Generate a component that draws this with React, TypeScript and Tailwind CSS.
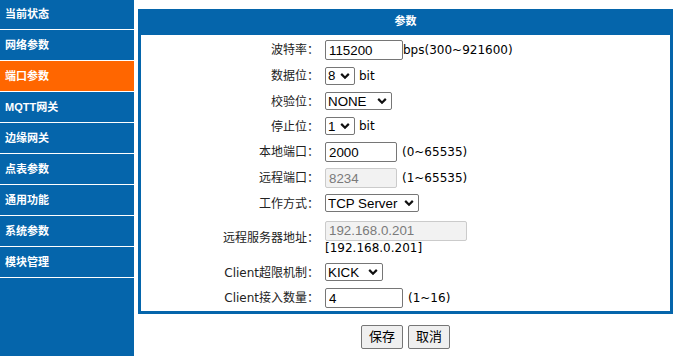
const menu = [
  '当前状态',
  '网络参数',
  '端口参数',
  'MQTT网关',
  '边缘网关',
  '点表参数',
  '通用功能',
  '系统参数',
  '模块管理',
]

const Chevron = () => (
  <svg
    className="pointer-events-none absolute right-[5px] top-1/2 -translate-y-1/2"
    width="10"
    height="7"
    viewBox="0 0 10 7"
    fill="none"
  >
    <path d="M1.2 1.4 5 5.2 8.8 1.4" stroke="#111" strokeWidth="2.2" />
  </svg>
)

const Select = ({ value, width }: { value: string; width: string }) => (
  <span className={`relative inline-block ${width}`}>
    <select
      defaultValue={value}
      className="h-[18px] w-full appearance-none rounded-[2px] border border-[#767676] bg-white pl-[2px] font-['Liberation_Sans',sans-serif] text-[13.33px] leading-none text-black"
    >
      <option>{value}</option>
    </select>
    <Chevron />
  </span>
)

const Input = ({
  value,
  width,
  disabled,
}: {
  value: string
  width: string
  disabled?: boolean
}) => (
  <input
    defaultValue={value}
    disabled={disabled}
    className={`h-[20px] ${width} rounded-[2px] border px-[3px] font-['Liberation_Sans',sans-serif] text-[13.33px] leading-none ${
      disabled
        ? 'border-[#cbcbcb] bg-[#f2f2f2] text-[#7a7a7a]'
        : 'border-[#767676] bg-white text-black'
    }`}
  />
)

const Row = ({
  label,
  height,
  children,
}: {
  label: string
  height: string
  children: React.ReactNode
}) => (
  <div className={`grid grid-cols-[178px_1fr] items-center ${height}`}>
    <div className="text-right text-[12px] text-[#222]">{label}</div>
    <div className="flex items-center pl-[6px] text-[12px] text-black">
      {children}
    </div>
  </div>
)

export default function App() {
  return (
    <div className="flex h-[356px] bg-white font-['DejaVu_Sans','Noto_Sans_CJK_SC',sans-serif]">
      <nav className="w-[134px] shrink-0 bg-[#0565ab]">
        <ul className="-mt-px font-['Liberation_Sans','Noto_Sans_CJK_SC',sans-serif]">
          {menu.map((item) => (
            <li
              key={item}
              className={`flex h-[31px] items-center border-b border-white pl-[5px] text-[11px] font-bold text-white ${
                item === '端口参数' ? 'bg-[#ff6600]' : ''
              }`}
            >
              {item}
            </li>
          ))}
        </ul>
      </nav>

      <main className="pl-[4px] pt-[9px]">
        <div className="w-[535px] border-x-[3px] border-b-[3px] border-[#0565ab]">
          <div className="-mx-[3px] flex h-[26px] items-center justify-center bg-[#0565ab] text-[11px] font-bold text-white">
            参数
          </div>

          <div className="pt-[2px]">
            <Row label="波特率：" height="h-[26px]">
              <Input value="115200" width="w-[78px]" />
              <span>bps(300~921600)</span>
            </Row>
            <Row label="数据位：" height="h-[26px]">
              <Select value="8" width="w-[30px]" />
              <span className="ml-[4px]">bit</span>
            </Row>
            <Row label="校验位：" height="h-[25px]">
              <Select value="NONE" width="w-[67px]" />
            </Row>
            <Row label="停止位：" height="h-[25px]">
              <Select value="1" width="w-[30px]" />
              <span className="ml-[4px]">bit</span>
            </Row>
            <Row label="本地端口：" height="h-[26px]">
              <Input value="2000" width="w-[72px]" />
              <span className="ml-[5px]">(0~65535)</span>
            </Row>
            <Row label="远程端口：" height="h-[26px]">
              <Input value="8234" width="w-[72px]" disabled />
              <span className="ml-[5px]">(1~65535)</span>
            </Row>
            <Row label="工作方式：" height="h-[25px]">
              <Select value="TCP Server" width="w-[94px]" />
            </Row>
            <div className="grid h-[44px] grid-cols-[178px_1fr] items-center">
              <div className="text-right text-[12px] text-[#222]">
                远程服务器地址：
              </div>
              <div className="flex flex-col items-start pl-[6px] text-[12px] text-black">
                <Input value="192.168.0.201" width="w-[142px]" disabled />
                <span className="leading-[15px]">[192.168.0.201]</span>
              </div>
            </div>
            <Row label="Client超限机制：" height="h-[25px]">
              <Select value="KICK" width="w-[58px]" />
            </Row>
            <Row label="Client接入数量：" height="h-[26px]">
              <Input value="4" width="w-[78px]" />
              <span className="ml-[5px]">(1~16)</span>
            </Row>
          </div>
        </div>

        <div className="mt-[11px] flex justify-center gap-[5px]">
          <button className="h-[24px] rounded-[2px] border border-[#767676] bg-[#efefef] px-[7px] text-[13px] text-black">
            保存
          </button>
          <button className="h-[24px] rounded-[2px] border border-[#767676] bg-[#efefef] px-[7px] text-[13px] text-black">
            取消
          </button>
        </div>
      </main>
    </div>
  )
}
